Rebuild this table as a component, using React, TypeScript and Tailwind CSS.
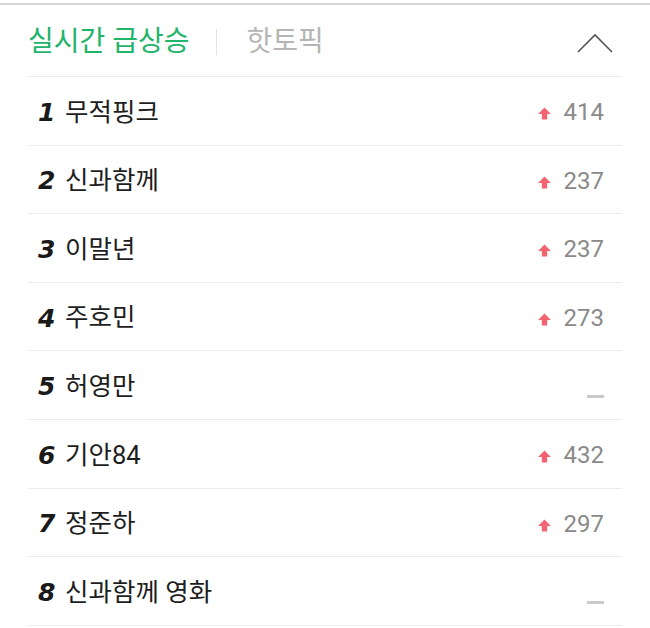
import React from "react";

type Keyword = {
  rank: number;
  name: string;
  count?: number;
};

const keywords: Keyword[] = [
  { rank: 1, name: "무적핑크", count: 414 },
  { rank: 2, name: "신과함께", count: 237 },
  { rank: 3, name: "이말년", count: 237 },
  { rank: 4, name: "주호민", count: 273 },
  { rank: 5, name: "허영만" },
  { rank: 6, name: "기안84", count: 432 },
  { rank: 7, name: "정준하", count: 297 },
  { rank: 8, name: "신과함께 영화" },
];

function UpArrow() {
  return (
    <svg width="15" height="15" viewBox="0 0 14 14" className="mt-[3px] shrink-0">
      <path d="M7 1.5 L13 7.5 H9.5 V12.5 H4.5 V7.5 H1 Z" fill="#f26470" />
    </svg>
  );
}

function ChevronUp() {
  return (
    <svg width="38" height="22" viewBox="0 0 38 22">
      <path d="M2 20 L19 3 L36 20" fill="none" stroke="#555" strokeWidth="1.6" />
    </svg>
  );
}

export default function App() {
  return (
    <div
      className="w-[650px] bg-white pt-[3px]"
      style={{ fontFamily: "Roboto, 'Noto Sans CJK KR', sans-serif" }}
    >
      <div className="h-[2px] bg-[#d6d6d6]" />
      <div className="px-[28px]">
        <header className="flex h-[72px] items-center border-b border-[#ececec] pt-[2px]">
          <span className="text-[28px] leading-none text-[#22b46a]">실시간 급상승</span>
          <span className="ml-[26px] mr-[30px] h-[26px] w-px bg-[#e3e3e3]" />
          <span className="text-[28px] leading-none text-[#b5b5b5]">핫토픽</span>
          <span className="ml-auto mr-[8px] mt-[2px] flex items-center">
            <ChevronUp />
          </span>
        </header>
        <ul>
          {keywords.map((k) => (
            <li
              key={k.rank}
              className="flex h-[68.6px] items-center border-b border-[#ececec] pl-[10px] pr-[18px] pt-[3px]"
            >
              <span
                className="w-[27px] text-[25px] font-bold italic leading-none text-[#1a1a1a]"
                style={{ fontFamily: "'DejaVu Sans', sans-serif" }}
              >
                {k.rank}
              </span>
              <span className="text-[25.5px] leading-none text-[#1e1e1e]">{k.name}</span>
              <span className="ml-auto flex items-center gap-[12px]">
                {k.count !== undefined ? (
                  <>
                    <UpArrow />
                    <span className="text-[24px] leading-none text-[#8a8a8a]">{k.count}</span>
                  </>
                ) : (
                  <span className="mt-[20px] h-[3px] w-[17px] bg-[#c9c9c9]" />
                )}
              </span>
            </li>
          ))}
        </ul>
      </div>
    </div>
  );
}
